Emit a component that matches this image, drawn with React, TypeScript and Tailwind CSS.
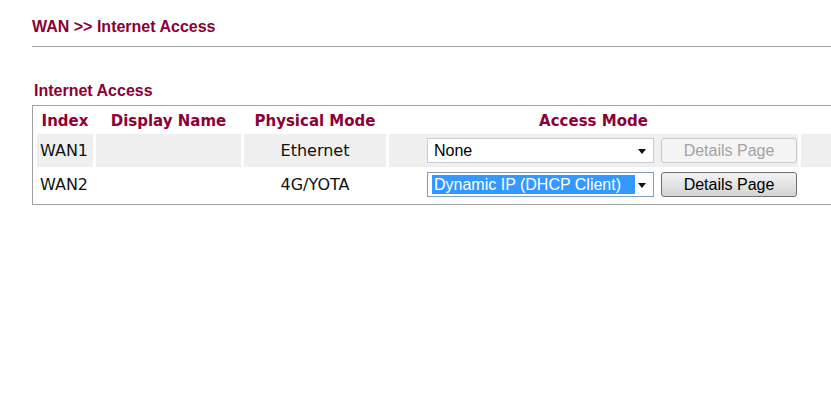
const RED = "text-[#8c0036]";

function FakeSelect({ value, focused }: { value: string; focused?: boolean }) {
  return (
    <div
      className={`flex h-[25px] w-[227px] items-center justify-between border bg-white pl-[4px] pr-[7px] text-[16px] text-black ${
        focused ? "border-[#7f9db9]" : "border-[#c8ccd2]"
      }`}
      style={{ fontFamily: "'Liberation Sans', Arial, sans-serif" }}
    >
      {focused ? (
        <span className="bg-[#3399ff] pl-[2px] pr-[14px] leading-[19px] text-white">{value}</span>
      ) : (
        <span className="pl-[2px] leading-[19px]">{value}</span>
      )}
      <svg width="8" height="5" viewBox="0 0 8 5" className="mt-[1px]">
        <path d="M0 0h8L4 5z" fill="#111" />
      </svg>
    </div>
  );
}

function DetailsButton({ disabled }: { disabled?: boolean }) {
  return (
    <button
      disabled={disabled}
      className={`h-[25px] w-[136px] rounded-[3px] border text-[16px] leading-[22px] ${
        disabled
          ? "border-[#c9c9c9] bg-[#f4f4f4] text-[#a3a3a3]"
          : "border-[#707070] bg-gradient-to-b from-[#f3f3f3] to-[#d3d3d3] text-black"
      }`}
      style={{ fontFamily: "'Liberation Sans', Arial, sans-serif" }}
    >
      Details Page
    </button>
  );
}

const rows = [
  { index: "WAN1", name: "", phys: "Ethernet", mode: "None", focused: false, shade: true },
  { index: "WAN2", name: "", phys: "4G/YOTA", mode: "Dynamic IP (DHCP Client)", focused: true, shade: false },
];

export default function App() {
  return (
    <div className="h-[400px] w-full overflow-hidden bg-white pl-[32px] pt-[18px]">
      <div
        className={`h-[18px] text-[16px] font-bold leading-[18px] ${RED}`}
        style={{ fontFamily: "'Liberation Sans', Arial, sans-serif" }}
      >
        WAN &gt;&gt; Internet Access
      </div>
      <div className="mt-[10px] h-px bg-[#a0a0a0]" />

      <div
        className={`ml-[2px] mt-[35px] h-[18px] text-[16px] font-bold leading-[18px] ${RED}`}
        style={{ fontFamily: "'Liberation Sans', Arial, sans-serif" }}
      >
        Internet Access
      </div>

      <div className="mt-[5px] w-[880px] border border-[#a0a0a0] pb-[2px] pl-px pt-px">
        <table
          className="w-[840px] table-fixed border-separate border-spacing-x-[3px] border-spacing-y-px"
          style={{ fontFamily: "'DejaVu Sans', Verdana, sans-serif" }}
        >
          <colgroup>
            <col className="w-[56px]" />
            <col className="w-[145px]" />
            <col className="w-[142px]" />
            <col className="w-[409px]" />
            <col className="w-[70px]" />
          </colgroup>
          <thead>
            <tr className={`h-[25px] text-[15px] font-bold ${RED}`}>
              <th className="p-0 pt-[2px] text-center">Index</th>
              <th className="p-0 pt-[2px] text-center">Display Name</th>
              <th className="p-0 pt-[2px] text-center">Physical Mode</th>
              <th className="p-0 pt-[2px] text-center">Access Mode</th>
              <th className="p-0"></th>
            </tr>
          </thead>
          <tbody>
            {rows.map((r) => {
              const bg = r.shade ? "bg-[#efefef]" : "bg-white";
              return (
                <tr key={r.index} className="h-[33px] text-[16px] text-[#111]">
                  <td className={`${bg} p-0 pl-[3px]`}>{r.index}</td>
                  <td className={`${bg} p-0`}>{r.name}</td>
                  <td className={`${bg} p-0 text-center`}>{r.phys}</td>
                  <td className={`${bg} p-0`}>
                    <div className="flex items-center justify-end gap-[7px] pr-px">
                      <FakeSelect value={r.mode} focused={r.focused} />
                      <DetailsButton disabled={!r.focused} />
                    </div>
                  </td>
                  <td className={`${bg} p-0`}></td>
                </tr>
              );
            })}
          </tbody>
        </table>
      </div>
    </div>
  );
}
